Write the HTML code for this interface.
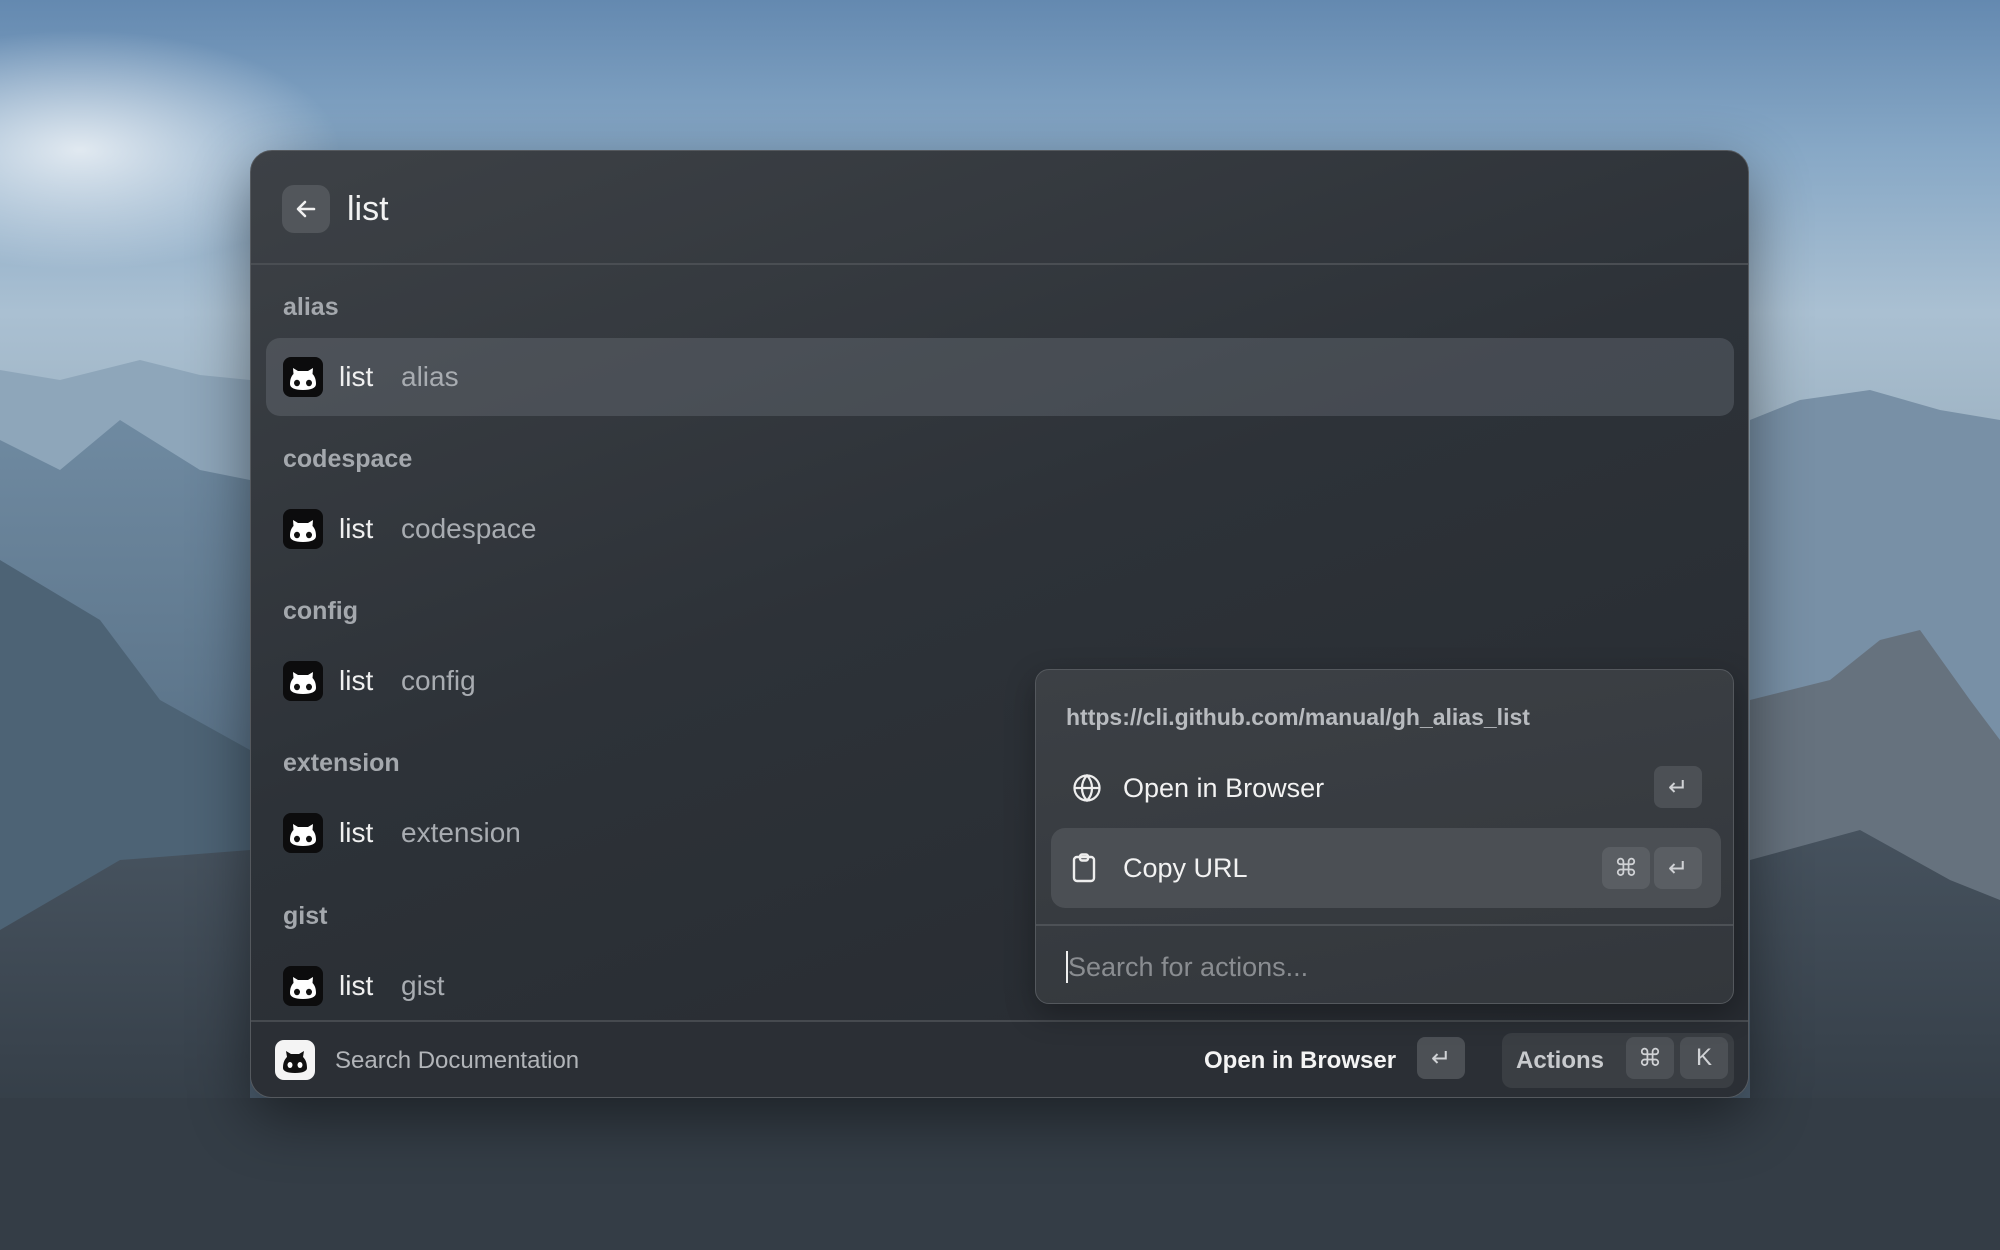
<!DOCTYPE html>
<html><head><meta charset="utf-8"><style>
*{margin:0;padding:0;box-sizing:border-box}
body{width:2000px;height:1250px;overflow:hidden;position:relative;font-family:"Liberation Sans",sans-serif;background:#4d6680}
.bg{position:absolute;inset:0}
.win{position:absolute;left:250px;top:150px;width:1499px;height:948px;border-radius:22px;background:linear-gradient(160deg,#3d4146 0%,#2d3238 45%,#262a30 100%);border:1px solid #55595e;box-shadow:0 20px 60px rgba(0,0,0,.45);overflow:hidden}
.abs{position:absolute}
.t{position:absolute;white-space:nowrap;line-height:1}
.sec{color:#a4a8ad;font-size:25px;font-weight:bold;left:32px}
.lst{color:#f0f0f0;font-size:28px;left:88px}
.sub{color:#a8acb1;font-size:28px;left:150px}
.ico{position:absolute;left:32px;width:40px;height:40px}
.key{position:absolute;width:48px;height:42px;border-radius:8px;background:#4c5055;color:#d0d2d5;font-size:24px;display:flex;align-items:center;justify-content:center}
</style></head><body>
<svg class="bg" width="2000" height="1250" viewBox="0 0 2000 1250">
<defs>
<linearGradient id="sky" x1="0" y1="0" x2="0" y2="1"><stop offset="0" stop-color="#6489b0"/><stop offset=".12" stop-color="#87a8c6"/><stop offset=".25" stop-color="#aac0d2"/><stop offset=".35" stop-color="#9fb4c4"/><stop offset="1" stop-color="#3a4c5e"/></linearGradient>
<linearGradient id="m1" x1="0" y1="0" x2="0" y2="1"><stop offset="0" stop-color="#6f8aa1"/><stop offset="1" stop-color="#3d5164"/></linearGradient>
<linearGradient id="m2" x1="0" y1="0" x2="0" y2="1"><stop offset="0" stop-color="#46525e"/><stop offset="1" stop-color="#2c343c"/></linearGradient>
<radialGradient id="haze" cx=".5" cy=".5" r=".5"><stop offset="0" stop-color="#fff" stop-opacity=".75"/><stop offset="1" stop-color="#fff" stop-opacity="0"/></radialGradient>
</defs>
<rect width="2000" height="1250" fill="url(#sky)"/>
<ellipse cx="80" cy="150" rx="260" ry="120" fill="url(#haze)"/>
<path d="M0 370 L60 380 L140 360 L200 375 L250 380 L250 1250 L0 1250Z" fill="#8ea6ba"/>
<path d="M0 440 L60 470 L120 420 L200 470 L250 480 L250 1250 L0 1250Z" fill="url(#m1)"/>
<path d="M0 560 L100 620 L160 700 L250 750 L250 1250 L0 1250Z" fill="#4d6375"/>
<path d="M0 930 L120 860 L250 850 L250 1250 L0 1250Z" fill="url(#m2)"/>
<path d="M1750 420 L1800 400 L1870 390 L1940 410 L2000 420 L2000 1250 L1750 1250Z" fill="#7890a6"/>
<path d="M1750 700 L1830 680 L1880 640 L1920 630 L1970 700 L2000 740 L2000 1250 L1750 1250Z" fill="#66727e"/>
<path d="M1750 860 L1860 830 L1950 880 L2000 900 L2000 1250 L1750 1250Z" fill="url(#m2)"/>
<rect x="0" y="1098" width="2000" height="152" fill="#343d46"/>
</svg>

<div class="win">
 <div class="abs" style="left:31px;top:34px;width:48px;height:48px;border-radius:12px;background:#52565b"></div>
 <svg class="abs" style="left:43px;top:46px" width="24" height="24" viewBox="0 0 24 24"><path d="M20 12H5M11 5l-7 7 7 7" stroke="#f0f0f0" stroke-width="2.6" fill="none" stroke-linecap="round" stroke-linejoin="round"/></svg>
 <div class="t" style="left:96px;top:41px;font-size:34px;color:#f2f2f2">list</div>
 <div class="abs" style="left:0;top:112px;width:100%;height:2px;background:#4a4e53"></div>

 <div class="abs" style="left:15px;top:187px;width:1468px;height:78px;border-radius:14px;background:rgba(120,128,138,.32)"></div>

 <div class="t sec" style="top:144px">alias</div>
 <div class="t sec" style="top:296px">codespace</div>
 <div class="t sec" style="top:448px">config</div>
 <div class="t sec" style="top:600px">extension</div>
 <div class="t sec" style="top:753px">gist</div>

 <svg class="ico" style="top:206px" viewBox="0 0 40 40"><use href="#cat"/></svg>
 <div class="t lst" style="top:212px">list</div><div class="t sub" style="top:212px">alias</div>
 <svg class="ico" style="top:358px" viewBox="0 0 40 40"><use href="#cat"/></svg>
 <div class="t lst" style="top:364px">list</div><div class="t sub" style="top:364px">codespace</div>
 <svg class="ico" style="top:510px" viewBox="0 0 40 40"><use href="#cat"/></svg>
 <div class="t lst" style="top:516px">list</div><div class="t sub" style="top:516px">config</div>
 <svg class="ico" style="top:662px" viewBox="0 0 40 40"><use href="#cat"/></svg>
 <div class="t lst" style="top:668px">list</div><div class="t sub" style="top:668px">extension</div>
 <svg class="ico" style="top:815px" viewBox="0 0 40 40"><use href="#cat"/></svg>
 <div class="t lst" style="top:821px">list</div><div class="t sub" style="top:821px">gist</div>

 <div class="abs" style="left:0;top:869px;width:100%;height:2px;background:#464a4f"></div>
 <div class="abs" style="left:0;top:871px;width:100%;height:77px;background:#2b2f35"></div>
 <svg class="abs" style="left:24px;top:889px" width="40" height="40" viewBox="0 0 40 40"><rect width="40" height="40" rx="9" fill="#f4f4f4"/><path d="M8 28c0-6 2-9 4-11l-1-6 5 3h8l5-3-1 6c2 2 4 5 4 11 0 3-4 5-12 5s-12-2-12-5z" fill="#111"/><ellipse cx="15" cy="25" rx="2.5" ry="3" fill="#fff"/><ellipse cx="25" cy="25" rx="2.5" ry="3" fill="#fff"/></svg>
 <div class="t" style="left:84px;top:898px;font-size:24px;color:#b2b5b9">Search Documentation</div>
 <div class="t" style="left:953px;top:898px;font-size:24px;color:#f4f4f4;font-weight:bold">Open in Browser</div>
 <div class="key" style="left:1166px;top:886px">↵</div>
 <div class="abs" style="left:1251px;top:882px;width:232px;height:55px;border-radius:10px;background:#3a3e43"></div>
 <div class="t" style="left:1265px;top:898px;font-size:24px;color:#c8cacd;font-weight:bold">Actions</div>
 <div class="key" style="left:1375px;top:886px">⌘</div>
 <div class="key" style="left:1429px;top:886px">K</div>

 <div class="abs" style="left:784px;top:518px;width:699px;height:335px;border-radius:14px;background:linear-gradient(170deg,#3c4045,#33373c);border:1.5px solid #54585d;box-shadow:0 10px 30px rgba(0,0,0,.3)">
  <div class="t" style="left:30px;top:36px;font-size:23px;color:#b8bbbf;font-weight:bold">https://cli.github.com/manual/gh_alias_list</div>
  <svg class="abs" style="left:36px;top:103px" width="30" height="30" viewBox="0 0 24 24" fill="none" stroke="#eee" stroke-width="1.8"><circle cx="12" cy="12" r="10"/><path d="M2 12h20M12 2c3 3 4 6.5 4 10s-1 7-4 10c-3-3-4-6.5-4-10s1-7 4-10z"/></svg>
  <div class="t" style="left:87px;top:105px;font-size:27px;color:#f2f2f2">Open in Browser</div>
  <div class="key" style="left:618px;top:96px">↵</div>
  <div class="abs" style="left:15px;top:158px;width:670px;height:80px;border-radius:14px;background:#4b4f54"></div>
  <svg class="abs" style="left:36px;top:183px" width="26" height="30" viewBox="0 0 26 30" fill="none" stroke="#eee" stroke-width="2.4"><rect x="2" y="4" width="20" height="24" rx="3"/><rect x="8" y="1.5" width="8" height="6" rx="2"/></svg>
  <div class="t" style="left:87px;top:185px;font-size:27px;color:#f2f2f2">Copy URL</div>
  <div class="key" style="left:566px;top:177px;background:#5a5e63">⌘</div>
  <div class="key" style="left:618px;top:177px;background:#5a5e63">↵</div>
  <div class="abs" style="left:0;top:254px;width:100%;height:2px;background:#4d5156"></div>
  <div class="abs" style="left:30px;top:281px;width:2px;height:32px;background:#eee"></div>
  <div class="t" style="left:32px;top:284px;font-size:27px;color:#8a8d91">Search for actions...</div>
 </div>
</div>
<svg width="0" height="0" style="position:absolute"><defs><g id="cat"><rect width="40" height="40" rx="8" fill="#0c0c0d"/><path d="M7 27c0-5 1.5-8 3.5-10l-.5-6 5 3h10l5-3-.5 6c2 2 3.5 5 3.5 10 0 4-5 6-13 6s-13-2-13-6z" fill="#fff"/><ellipse cx="14" cy="26" rx="3" ry="3.2" fill="#111"/><ellipse cx="26" cy="26" rx="3" ry="3.2" fill="#111"/></g></defs></svg>
</body></html>
